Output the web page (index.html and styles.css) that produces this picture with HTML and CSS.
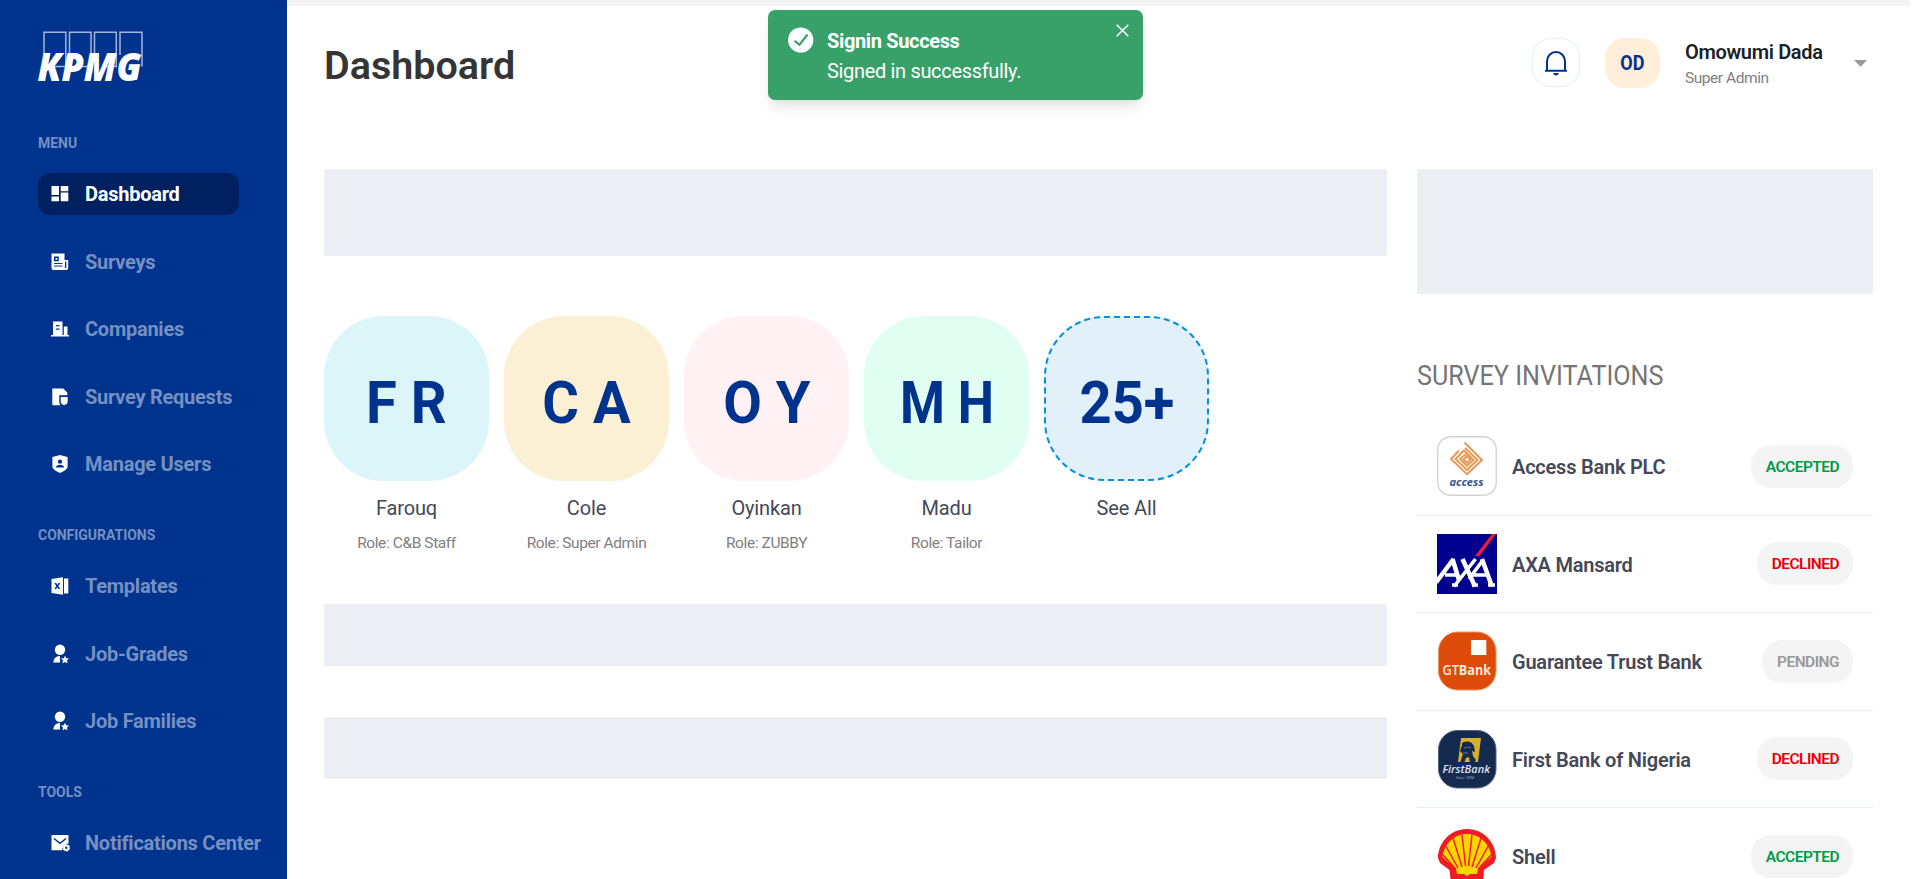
FILE: index.html
```html
<!DOCTYPE html>
<html lang="en">
<head>
<meta charset="utf-8">
<title>Dashboard</title>
<link rel="stylesheet" href="styles.css">
</head>
<body>
<svg width="0" height="0" class="defs">
  <symbol id="user-star" viewBox="0 0 18 20">
    <circle cx="9" cy="5.700" r="5.200"/>
    <path d="M2.300 18.600C2.500 14.400 5 12 9 12v6.600z"/>
    <path d="M14 11.800l1.200 2.400 2.800.4-2 1.900.5 2.800-2.500-1.300-2.500 1.300.5-2.800-2-1.900 2.800-.4z"/>
  </symbol>
</svg>
<div class="page">
  <aside class="sidebar">
    <svg class="logo" viewBox="0 0 106 51" width="106" height="51">
      <g fill="none" stroke="#a3b6da" stroke-width="1.500"><path d="M6 24V1.200h21.800V35.500H14M31.500 24V1.200h21.500V35.500H40M56.500 24V1.200h21.800V35.500H66M82 24V1.200h22V35.500"/></g>
      <text class="logo-text" x="-0.500" y="49.500" textLength="104" lengthAdjust="spacingAndGlyphs">KPMG</text>
    </svg>
    <nav class="nav">
      <h2 class="nav-label">MENU</h2>
      <a class="nav-item active"><svg class="ico" viewBox="0 0 18 18"><path d="M.5 1h7.500v9H.5zM9.700 1h7.600v5.200H9.700zM9.700 7.500h7.600v8.800H9.700zM.5 11.500h7.500v4.800H.5z"/></svg><span>Dashboard</span></a>
      <a class="nav-item"><svg class="ico" viewBox="0 0 18 18"><path fill-rule="evenodd" d="M.5.5h13v6.500h3.700v8q0 2-2 2H2.500q-2 0-2-2zM3 3.500v4.800h4.800V3.500zM3 10v1h8.500v-1zM3 12.500v1h8.500v-1zM14 8.500V15h1.300V8.500zM4.500 5h1.800v1.800H4.500z"/></svg><span>Surveys</span></a>
      <a class="nav-item"><svg class="ico" viewBox="0 0 18 18"><path fill-rule="evenodd" d="M2 15V1.500h9.500V15h1.300V6.500h3.700V15H18v1.500H0V15zM5 5v1.200h3.500V5zM5 8.500v1.200h3.500V8.500z"/></svg><span>Companies</span></a>
      <a class="nav-item"><svg class="ico" viewBox="0 0 18 18"><path d="M1.300.5h11l4 4v2.800H8.200v6.200q0 2 1.200 3.800H2.500q-1.200 0-1.200-1.200z"/><path d="M9.700 9h7v4.500q0 2.500-3.500 3.700-3.500-1.200-3.500-3.700z"/></svg><span>Survey Requests</span></a>
      <a class="nav-item"><svg class="ico" viewBox="0 0 18 18"><path fill-rule="evenodd" d="M9 0l7.600 2v10Q16 15 9 18 2 15 1.400 12V2zM9 4.500a2 2 0 100 4.300 2 2 0 000-4.300zM4.800 12.500h8.400Q12.500 9.800 9 9.800T4.800 12.500z"/></svg><span>Manage Users</span></a>
      <h2 class="nav-label">CONFIGURATIONS</h2>
      <a class="nav-item"><svg class="ico" viewBox="0 0 18 18"><path fill-rule="evenodd" d="M.5 2L12 .2v17.600L.5 16zM3.300 6l2 3-2 3h1.900l1.100-1.800L7.400 12h1.900l-2-3 2-3H7.400L6.300 7.800 5.200 6z"/><path d="M13 1.500h4.300v15H13z"/></svg><span>Templates</span></a>
      <a class="nav-item"><svg class="ico tall"><use href="#user-star"/></svg><span>Job-Grades</span></a>
      <a class="nav-item"><svg class="ico tall"><use href="#user-star"/></svg><span>Job Families</span></a>
      <h2 class="nav-label">TOOLS</h2>
      <a class="nav-item"><svg class="ico wide" viewBox="0 0 19 18"><path d="M.5 1h17v8.500q-6 0-6.300 6.800H.5z"/><path d="M3 4.500l6 4.800 6-4.800" fill="none" stroke="#00338d" stroke-width="1.500"/><circle cx="15.300" cy="13.800" r="2.200" fill="none" stroke="#fff" stroke-width="2" /><circle cx="15.300" cy="13.800" r="3.400" fill="none" stroke="#fff" stroke-width="1" stroke-dasharray="1.700 1.860"/></svg><span>Notifications Center</span></a>
    </nav>
  </aside>
  <main class="main">
    <header class="header">
      <h1 class="title">Dashboard</h1>
      <div class="tools">
        <div class="bell"><svg viewBox="0 0 24 26" width="24" height="26"><path d="M3 20.500v-9.200a9 9.300 0 0118 0v9.200M1 20.800h22" fill="none" stroke="#00338d" stroke-width="2"/><path d="M9 23h6q-1 2.500-3 2.500T9 23z" fill="#00338d"/></svg></div>
        <div class="avatar"><span class="narrow-od">OD</span></div>
        <div class="who"><b class="who-name">Omowumi Dada</b><span class="who-role">Super Admin</span></div>
        <svg class="caret" viewBox="0 0 13 7" width="13" height="7"><path d="M0 0h13L6.500 6.800z" fill="#999"/></svg>
      </div>
    </header>
    <div class="content">
      <section class="left">
        <div class="skel skel-a"></div>
        <div class="users">
          <div class="user"><div class="tile cyan"><span>F R</span></div><p class="name">Farouq</p><p class="role">Role: C&amp;B Staff</p></div>
          <div class="user"><div class="tile sand"><span>C A</span></div><p class="name">Cole</p><p class="role">Role: Super Admin</p></div>
          <div class="user"><div class="tile pink"><span>O Y</span></div><p class="name">Oyinkan</p><p class="role">Role: ZUBBY</p></div>
          <div class="user"><div class="tile mint"><span>M H</span></div><p class="name">Madu</p><p class="role">Role: Tailor</p></div>
          <div class="user"><div class="tile more"><span>25+</span></div><p class="name">See All</p></div>
        </div>
        <div class="skel skel-b"></div>
        <div class="skel skel-c"></div>
      </section>
      <section class="right">
        <div class="skel skel-d"></div>
        <h2 class="inv-title">SURVEY INVITATIONS</h2>
        <div class="inv">
          <svg class="brand" viewBox="0 0 60 60"><rect x=".7" y=".7" width="58.600" height="58.600" rx="13" fill="#fff" stroke="#d3d3d6" stroke-width="1.400"/><g fill="none" stroke="#e9964f" stroke-width="1.900"><path d="M27.500 6.500L45 24 30 38.300 14 23l8-8.500"/><path d="M28 12L40.500 24 30 34 18.500 23l7.500-7.500"/><path d="M24 17l3-2.500L36.500 24 30 30l-7-7 6-5"/><path d="M30 20l3.500 3.500L30 27l-3.500-3.500z"/></g><text class="t-access" x="12.500" y="50" textLength="34" lengthAdjust="spacingAndGlyphs">access</text></svg>
          <span class="inv-name">Access Bank PLC</span><span class="badge ok">ACCEPTED</span>
        </div>
        <div class="inv">
          <svg class="brand" viewBox="0 0 60 60"><path fill="#00008f" d="M0 0h60v60H0z"/><path d="M38 22L55 0h4L42.500 22z" fill="#ed1b34"/><g stroke="#fff" fill="none"><path stroke-width="4.500" d="M-1 48.500L16.500 25M15.500 25L22 46M25.500 25L38 52.500M45 25L55 52.500"/><path stroke-width="3.600" d="M38.500 25L17 52.500M46 26L32 45M8 41h13M36 41h15M15 51h6M35 51h6M51 51h7"/></g></svg>
          <span class="inv-name">AXA Mansard</span><span class="badge no">DECLINED</span>
        </div>
        <div class="inv">
          <svg class="brand" viewBox="0 0 60 60"><rect x="1.500" y="1" width="57.500" height="58" rx="19" fill="#de4a09" stroke="#e9955f"/><path fill="#fff" d="M34 9h15.300v15H34z"/><text class="t-gt" x="5.500" y="44" textLength="48.500" lengthAdjust="spacingAndGlyphs">GT<tspan font-weight="700">Bank</tspan></text></svg>
          <span class="inv-name">Guarantee Trust Bank</span><span class="badge wait">PENDING</span>
        </div>
        <div class="inv">
          <svg class="brand" viewBox="0 0 60 60"><rect x="1.500" y="1.500" width="57.500" height="57.500" rx="19" fill="#142b4f" stroke="#52627c"/><path d="M24 9h20l-3 24H21z" fill="#d8b02c"/><path d="M25 14q8-4 12 3l1 6-3-1 1 5 3 4-2 3h-4l-1-6-3 1-2 5h-4l3-9-3-3 2-6z" fill="#142b4f"/><path d="M27 19q4-2 7 0M26 24h5" stroke="#5d7186" fill="none"/><text class="t-fb" x="5.500" y="44" textLength="47.500" lengthAdjust="spacingAndGlyphs">FirstBank</text><text class="t-since" x="19" y="50" textLength="18">Since 1894</text></svg>
          <span class="inv-name">First Bank of Nigeria</span><span class="badge no">DECLINED</span>
        </div>
        <div class="inv">
          <svg class="brand" viewBox="0 0 60 60"><path d="M30 3C48 3 59 18 59 32L57 37 47 44 46 57H14L12.500 44 3 37 1 32C1 18 12 3 30 3z" fill="#ee1c25"/><path d="M30 8C43 8 53 18 54.500 31L44 39.500 41 42 40 48H33L30 50 27 48H20l-1-6-4-2.500L5.500 31C7 18 17 8 30 8z" fill="#ffd500"/><path d="M28.500 40L25 8.500M31.500 40L35 8.500M25 41L16 12M35 41l9-29M21 42L8.500 19.500M39 42l12.500-22.500M17 41L5 28M43 41l12-13" stroke="#ee1c25" stroke-width="1.500"/></svg>
          <span class="inv-name">Shell</span><span class="badge ok">ACCEPTED</span>
        </div>
      </section>
    </div>
  </main>
</div>
<div class="toast" role="alert">
  <svg class="toast-ico" viewBox="0 0 26 26" width="26" height="26"><circle cx="12.700" cy="13" r="12.600" fill="#fff"/><path d="M6.500 13.800l5 4L19.500 7.500" fill="none" stroke="#38a169" stroke-width="2.200"/></svg>
  <div class="toast-body"><b class="toast-title">Signin Success</b><span class="toast-text">Signed in successfully.</span></div>
  <svg class="toast-x" viewBox="0 0 13 13" width="13" height="13"><path d="M.7.7l11.600 11.600M12.300.7L.7 12.300" stroke="#fff" stroke-width="1.500"/></svg>
</div>
</body>
</html>
```
FILE: styles.css
```css
* { box-sizing: border-box; margin: 0; padding: 0; }
body { width: 1920px; height: 879px; overflow: hidden; background: #fff; font-family: Roboto, "Liberation Sans", sans-serif; }
.defs { display: block; }
.page { display: flex; width: 1910px; height: 879px; overflow: hidden; }

.sidebar { flex: none; width: 287px; background: #00338d; padding: 31px 0 0 38px; }
.logo { display: block; overflow: visible; }
.logo-text { font: italic 800 39px "Open Sans", sans-serif; fill: #fff; }
.nav { display: flex; flex-direction: column; padding-top: 51px; }
.nav-label { height: 20px; line-height: 20px; font-size: 15.500px; font-weight: 700; color: #7590c1; margin-bottom: 20px; white-space: nowrap; transform: scaleX(.9); transform-origin: left; }
.nav-item + .nav-label { margin-top: 14px; }
.nav-item { display: flex; align-items: center; width: 201px; height: 42px; margin-bottom: 25.600px; padding-left: 13px; gap: 16px; border-radius: 12px; font-size: 20px; font-weight: 700; letter-spacing: -.25px; color: #7590c1; white-space: nowrap; }
.nav-item.active { background: #00205f; color: #fff; }
.ico { width: 18px; height: 18px; fill: #fff; flex: none; }
.tall { height: 20px; }
.wide { width: 19px; margin-right: -1px; }

.main { flex: 1; border-top: 6px solid #f4f4f4; padding: 0 37px; }
.header { display: flex; justify-content: space-between; height: 163px; padding-top: 32px; }
.title { font-size: 39.500px; line-height: 56px; font-weight: 600; color: #353535; }
.tools { display: flex; height: 50px; }
.bell { width: 48px; height: 49px; border: 1px solid #e0f0f9; border-radius: 19px; display: grid; place-items: center; margin-right: 25px; }
.avatar { width: 55px; height: 50px; border-radius: 20px; background: #ffeed9; color: #00338d; font-size: 20px; font-weight: 700; display: grid; place-items: center; margin-right: 25px; }
.narrow-od { transform: scaleX(.9); }
.who { display: flex; flex-direction: column; width: 169px; white-space: nowrap; }
.who-name { font-size: 20px; line-height: 28px; font-weight: 600; letter-spacing: -.35px; color: #1b1f27; }
.who-role { font-size: 15.500px; line-height: 24px; font-weight: 400; letter-spacing: -.45px; color: #808080; }
.caret { margin: 22px 6px 0 0; }

.content { display: flex; gap: 30px; }
.left { width: 1063px; }
.right { width: 456px; }
.skel { background: #ebeef3; border-radius: 2px; }
.skel-a { height: 87px; }
.users { display: flex; gap: 15px; padding-top: 60px; height: 348px; }
.user { width: 165px; text-align: center; }
.tile { height: 165px; border-radius: 60px; font-size: 59px; font-weight: 700; color: #00338d; line-height: 173px; white-space: nowrap; }
.tile span { display: inline-block; transform: scaleX(.95); }
.cyan { background: #dbf5f9; }
.sand { background: #fbefd4; }
.pink { background: #fff1f4; }
.mint { background: #e0fef2; }
.mint span { transform: scaleX(.87); }
.more { background: #e2f1f9; border: 2px dashed #0091da; line-height: 169px; }
.name { font-size: 20px; line-height: 24px; padding-top: 15px; letter-spacing: -.15px; color: #454857; }
.role { font-size: 15.500px; line-height: 20px; padding-top: 13px; font-weight: 400; letter-spacing: -.4px; color: #808080; }
.skel-b { height: 62px; margin-bottom: 51px; }
.skel-c { height: 62px; }
.skel-d { height: 125px; }
.inv-title { font-size: 27.500px; line-height: 36px; margin-top: 64px; margin-bottom: 24px; font-weight: 400; color: #757575; white-space: nowrap; transform: scaleX(.915); transform-origin: left; }
.inv { display: flex; align-items: center; height: 97.500px; padding: 0 20px; border-bottom: 1px solid #e0f0f9; }
.brand { width: 60px; height: 60px; flex: none; margin-right: 15px; }
.inv-name { flex: 1; padding-top: 2px; font-size: 20px; font-weight: 600; letter-spacing: -.22px; color: #454857; white-space: nowrap; }
.badge { height: 43px; line-height: 44px; padding: 0 14px 0 15px; border-radius: 20px; background: #f4f4f4; font-size: 15.500px; font-weight: 600; letter-spacing: -.55px; }
.ok { color: #009a44; }
.no { color: #e60009; }
.wait { color: #999; }
.t-access { font: italic 700 11px "Open Sans", sans-serif; fill: #34548c; }
.t-gt { font: 600 14px "Open Sans", sans-serif; fill: #fde7da; }
.t-fb { font: italic 600 11px "Open Sans", sans-serif; fill: #dfe4ec; }
.t-since { font: italic 4px "Open Sans", sans-serif; fill: #a9b4c6; }

.toast { position: absolute; left: 768px; top: 10px; width: 375px; height: 90px; border-radius: 7px; background: #38a169; color: #fff; display: flex; padding: 17px 14px 0 20px; box-shadow: 0 10px 15px -3px rgba(0,0,0,.1), 0 4px 6px -2px rgba(0,0,0,.05); }
.toast-body { flex: 1; display: flex; flex-direction: column; padding-left: 13px; font-size: 20px; line-height: 30px; white-space: nowrap; }
.toast-title { font-weight: 700; letter-spacing: -.35px; margin-top: -1px; }
.toast-text { font-weight: 400; letter-spacing: -.33px; }
.toast-x { margin-top: -3px; }
```
